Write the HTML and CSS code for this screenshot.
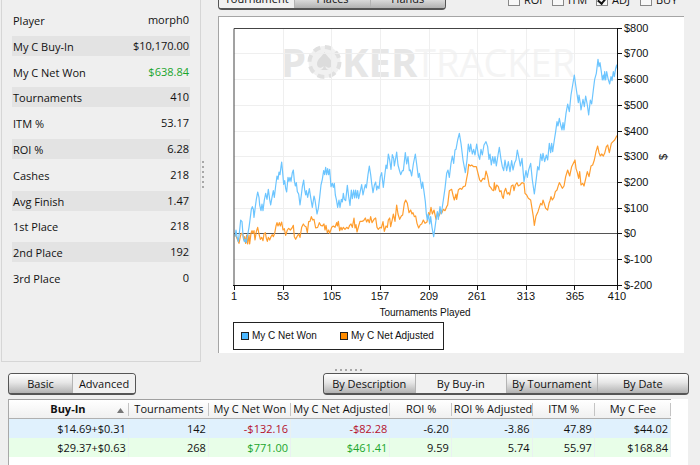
FILE: index.html
```
<!DOCTYPE html>
<html lang="en">
<head>
<meta charset="utf-8">
<title>Tournament results</title>
<link rel="stylesheet" href="styles.css">
</head>
<body>
<main class="app">
  <div class="upper">
    <aside class="summary">
      <dl class="stats">
        <div class="stat"><dt>Player</dt><dd>morph0</dd></div>
        <div class="stat"><dt>My C Buy-In</dt><dd>$10,170.00</dd></div>
        <div class="stat"><dt>My C Net Won</dt><dd class="gain">$638.84</dd></div>
        <div class="stat"><dt>Tournaments</dt><dd>410</dd></div>
        <div class="stat"><dt>ITM %</dt><dd>53.17</dd></div>
        <div class="stat"><dt>ROI %</dt><dd>6.28</dd></div>
        <div class="stat"><dt>Cashes</dt><dd>218</dd></div>
        <div class="stat"><dt>Avg Finish</dt><dd>1.47</dd></div>
        <div class="stat"><dt>1st Place</dt><dd>218</dd></div>
        <div class="stat"><dt>2nd Place</dt><dd>192</dd></div>
        <div class="stat"><dt>3rd Place</dt><dd>0</dd></div>
      </dl>
    </aside>
    <div class="splitter splitter-v"><i></i><i></i><i></i><i></i><i></i><i></i></div>
    <section class="graph">
      <div class="toolbar">
        <div class="segments views">
          <button type="button" class="active">Tournament</button>
          <button type="button">Places</button>
          <button type="button">Hands</button>
        </div>
        <div class="options">
          <label class="option"><input type="checkbox">ROI</label>
          <label class="option"><input type="checkbox">ITM</label>
          <label class="option"><input type="checkbox" checked>ADJ</label>
          <label class="option"><input type="checkbox">BUY</label>
        </div>
      </div>
      <div class="chart">
        <svg viewBox="219 17 465 336" role="img" aria-label="Tournaments Played">
          <g class="mark">
            <text class="mark-bold" x="281" y="77">P</text>
            <circle class="chip" cx="324.500" cy="62" r="16"/>
            <circle class="chip-edge" cx="324.500" cy="62" r="15"/>
            <path class="spade" d="M324.500 52C322 57 317 59 317 64C317 68 321 69 323.500 66C323.500 68 322.500 69.500 320 70H329C326.500 69.500 325.500 68 325.500 66C328 69 332 68 332 64C332 59 327 57 324.500 52Z"/>
            <text class="mark-bold" x="342" y="77">KER</text>
            <text class="mark-light" x="415" y="77">TRACKER</text>
          </g>
          <path class="grid" d="M283.500 28V285M331.500 28V285M380.500 28V285M429.500 28V285M477.500 28V285M526.500 28V285M574.500 28V285M234 53.500H617M234 79.500H617M234 105.500H617M234 131.500H617M234 156.500H617M234 182.500H617M234 208.500H617M234 259.500H617"/>
          <path class="zero" d="M234 233.500H617"/>
          <g transform="translate(225 140) scale(.333333)">
            <polyline class="adjusted" points="30,282 34,290 38,300 42,310 46,290 49,280 53,282 56,300 59,290 62,310 65,285 68,312 72,285 74,312 78,280 81,272 84,280 87,272 90,300 94,275 98,262 102,282 106,298 110,292 114,302 117,282 121,278 124,295 127,304 130,292 134,300 138,290 142,284 145,290 149,280 153,258 156,248 159,258 163,248 166,258 170,246 174,270 178,266 182,286 187,270 191,265 196,270 201,264 205,256 208,290 212,298 217,288 221,282 225,292 230,262 235,252 239,258 243,260 247,278 251,245 255,244 259,230 263,240 267,238 272,264 278,262 283,248 287,256 292,258 297,252 300,270 303,256 307,278 311,270 314,280 320,262 325,258 330,262 335,248 337,258 340,244 344,272 348,262 351,270 355,262 360,268 365,262 370,266 374,256 378,252 382,262 387,234 390,264 393,254 396,276 401,258 405,244 411,244 416,242 421,234 425,246 429,238 433,248 437,230 441,248 447,238 452,234 456,262 460,268 465,262 469,264 474,245 478,274 483,258 487,262 490,240 494,234 497,260 502,238 505,222 510,244 515,195 519,222 524,238 529,228 533,225 538,190 542,180 547,190 552,218 557,210 561,222 564,218 568,230 572,228 576,250 581,264 586,254 590,252 595,240 600,250 606,246 611,218 614,225 618,202 622,222 627,210 633,238 638,218 642,228 647,215 650,220 655,208 660,212 665,200 668,195 673,152 680,148 685,170 688,180 693,162 695,178 700,150 705,145 710,148 715,140 721,138 725,115 728,100 731,73 736,78 740,75 746,80 754,80 759,100 764,120 768,125 774,115 779,118 783,93 788,110 793,138 797,142 802,150 806,152 808,128 811,150 815,135 820,140 824,155 828,152 832,170 835,175 838,155 842,145 847,162 851,158 854,165 859,138 864,135 867,152 871,135 876,128 880,138 885,135 891,128 897,130 900,160 905,165 910,175 917,180 921,205 925,230 928,256 933,228 939,215 942,205 947,190 951,195 954,180 958,192 962,205 968,210 972,190 975,182 978,170 982,180 987,172 991,155 996,150 999,140 1003,128 1007,135 1012,145 1017,138 1022,110 1028,90 1034,108 1040,80 1044,72 1050,60 1053,85 1057,98 1061,115 1064,95 1068,135 1073,130 1077,138 1083,112 1087,95 1092,110 1098,78 1103,75 1108,60 1113,35 1118,18 1122,38 1126,48 1130,42 1135,48 1139,40 1144,20 1148,15 1153,38 1159,10 1164,5 1169,0 1174,-10 1178,-15"/>
            <polyline class="won" points="30,290 33,270 36,290 40,305 44,270 47,240 51,245 54,285 58,305 61,298 64,308 68,285 72,262 75,240 79,208 82,200 85,208 87,232 91,200 94,178 98,156 102,172 104,195 108,212 111,192 114,212 118,180 122,160 126,178 130,148 134,178 137,195 141,172 145,152 148,172 152,138 156,108 159,118 162,96 165,104 168,80 170,66 173,98 176,133 179,122 182,145 185,156 189,112 192,124 195,112 198,124 202,98 205,90 208,122 211,138 214,128 217,155 221,162 225,195 229,165 232,140 236,120 239,150 242,165 244,152 248,172 253,146 257,172 262,202 267,168 270,180 276,222 280,205 284,172 288,135 292,118 296,92 299,104 302,82 305,104 308,86 311,104 314,88 318,140 322,130 325,142 328,130 331,165 334,178 338,202 342,180 345,202 349,178 352,186 355,160 358,178 362,182 367,136 371,170 375,196 379,150 382,176 386,150 389,174 392,150 395,174 398,152 401,176 405,158 410,134 414,165 418,146 421,134 424,144 429,104 433,78 437,104 440,130 444,158 448,136 452,126 455,150 458,138 462,146 466,110 470,98 475,142 479,108 483,75 486,86 490,42 494,60 498,88 502,44 506,55 508,78 512,55 515,36 519,75 523,90 527,104 532,92 535,92 541,38 545,72 549,50 553,92 556,90 560,108 565,72 571,42 576,80 580,112 583,100 587,125 590,145 593,126 597,155 601,185 604,222 607,240 610,222 614,252 617,230 621,262 626,290 630,262 633,240 637,215 640,238 645,200 649,222 655,180 660,145 665,100 669,90 673,112 678,70 682,48 686,70 690,30 693,28 698,0 703,-20 708,10 714,60 721,98 726,60 730,12 734,35 737,12 742,42 746,28 750,45 755,12 760,45 764,58 768,28 772,45 777,15 783,5 788,20 792,58 795,42 799,75 803,50 807,70 810,50 814,78 819,45 823,22 828,58 832,80 836,92 840,60 845,92 850,65 855,95 860,62 864,90 869,68 873,60 877,30 882,55 886,78 891,55 897,125 903,92 907,112 911,90 917,70 922,120 928,162 934,115 938,80 942,90 947,42 951,62 954,40 959,65 964,45 968,60 973,10 977,38 980,10 983,35 988,0 992,-25 996,-55 999,-42 1003,-65 1007,-45 1011,-30 1014,-52 1017,-30 1023,-80 1028,-108 1033,-85 1038,-135 1043,-165 1048,-195 1052,-165 1056,-138 1060,-112 1062,-135 1066,-110 1068,-90 1074,-122 1078,-100 1082,-132 1087,-105 1091,-75 1096,-120 1100,-108 1105,-150 1109,-182 1114,-200 1119,-242 1122,-220 1125,-232 1129,-205 1132,-180 1135,-195 1137,-180 1139,-205 1142,-180 1145,-205 1149,-185 1154,-168 1158,-190 1161,-178 1165,-205 1168,-190 1172,-215 1175,-225 1178,-212"/>
          </g>
          <path class="frame" d="M234 285.500V28.500H617"/>
          <path class="axis" d="M233 285.500H622M617.500 28V290M234.500 285V290M283.500 285V290M331.500 285V290M380.500 285V290M429.500 285V290M477.500 285V290M526.500 285V290M574.500 285V290M617 28.500H622M617 53.500H622M617 79.500H622M617 105.500H622M617 131.500H622M617 156.500H622M617 182.500H622M617 208.500H622M617 233.500H622M617 259.500H622"/>
          <g class="ticks">
            <text x="624" y="32">$800</text><text x="624" y="57">$700</text><text x="624" y="83">$600</text><text x="624" y="109">$500</text><text x="624" y="135">$400</text><text x="624" y="160">$300</text><text x="624" y="186">$200</text><text x="624" y="212">$100</text><text x="624" y="237">$0</text><text x="624" y="263">$-100</text><text x="624" y="289">$-200</text>
          </g>
          <g class="ticks centred">
            <text x="234" y="300">1</text><text x="283" y="300">53</text><text x="332" y="300">105</text><text x="380" y="300">157</text><text x="429" y="300">209</text><text x="477" y="300">261</text><text x="526" y="300">313</text><text x="575" y="300">365</text><text x="617" y="300">410</text>
            <text class="axis-title" x="425" y="316">Tournaments Played</text>
            <text transform="translate(667 157) rotate(-90)">$</text>
          </g>
          <g class="ticks axis-title">
            <rect class="key-box" x="233.500" y="322.500" width="210" height="27"/>
            <rect class="key-won" x="241.500" y="332.500" width="7" height="7"/>
            <text x="252" y="339">My C Net Won</text>
            <rect class="key-adjusted" x="340.500" y="332.500" width="7" height="7"/>
            <text x="351" y="339">My C Net Adjusted</text>
          </g>
        </svg>
      </div>
    </section>
  </div>
  <div class="splitter splitter-h"><i></i><i></i><i></i><i></i><i></i><i></i></div>
  <section class="lower">
    <div class="groupings">
      <div class="segments detail">
        <button type="button">Basic</button>
        <button type="button" class="active">Advanced</button>
      </div>
      <div class="segments by">
        <button type="button">By Description</button>
        <button type="button" class="active">By Buy-in</button>
        <button type="button">By Tournament</button>
        <button type="button">By Date</button>
      </div>
    </div>
    <div class="report">
      <table>
        <colgroup><col class="c-buyin"><col class="c-count"><col class="c-won"><col class="c-adj"><col class="c-roi"><col class="c-roiadj"><col class="c-itm"><col class="c-fee"></colgroup>
        <thead>
          <tr><th class="sorted">Buy-In<svg class="arrow" viewBox="0 0 7 5" aria-hidden="true"><path d="M0 5L3.500 0L7 5Z"/></svg></th><th>Tournaments</th><th>My C Net Won</th><th>My C Net Adjusted</th><th>ROI %</th><th>ROI % Adjusted</th><th>ITM %</th><th>My C Fee</th></tr>
        </thead>
        <tbody>
          <tr><td>$14.69+$0.31</td><td>142</td><td class="loss">-$132.16</td><td class="loss">-$82.28</td><td>-6.20</td><td>-3.86</td><td>47.89</td><td>$44.02</td></tr>
          <tr><td>$29.37+$0.63</td><td>268</td><td class="gain">$771.00</td><td class="gain">$461.41</td><td>9.59</td><td>5.74</td><td>55.97</td><td>$168.84</td></tr>
        </tbody>
      </table>
    </div>
  </section>
</main>
</body>
</html>
```
FILE: styles.css
```
* { box-sizing: border-box; }

body {
  margin: 0;
  background: #efefef;
  color: #111;
  font: 11px/18px "Open Sans", "Noto Sans", sans-serif;
}

.app {
  display: flex;
  flex-direction: column;
  min-height: 100vh;
}

.upper { display: flex; }

/* Player summary */
.summary {
  flex: 0 0 200px;
  margin-left: 1px;
  padding: 10px 10px 73px;
  border: solid #d6d6d6;
  border-width: 0 1px 1px;
}

.stats {
  display: flex;
  flex-direction: column;
  justify-content: space-between;
  min-height: 278px;
  margin: 0;
}

.stat {
  display: flex;
  justify-content: space-between;
  height: 20px;
  padding: 0 1px;
  line-height: 20px;
}

.stat:nth-child(even) { background: #e3e3e3; }
.stat dt { padding-top: 1px; }
.stat dd { margin: 0; }
.gain { color: #1aa52c; }
.loss { color: #b5122c; }

/* Drag handles between panes */
.splitter { display: flex; gap: 3px; }
.splitter i { width: 2px; height: 2px; background: #a8a8a8; }

.splitter-v {
  flex: 0 0 17px;
  flex-direction: column;
  padding: 161px 0 0 1px;
}

.splitter-h {
  justify-content: center;
  padding: 7px 4px 2px 0;
}

/* Graph pane */
.graph { flex: 1; min-width: 0; padding-right: 16px; }

.toolbar {
  display: flex;
  justify-content: space-between;
  align-items: flex-end;
  height: 10px;
  margin-bottom: 6px;
  overflow: hidden;
}

.options {
  display: flex;
}

.option {
  display: flex;
  align-items: flex-end;
  gap: 4px;
  width: 44px;
  height: 18px;
  padding-bottom: 4px;
  line-height: 13px;
  white-space: nowrap;
}

.option input {
  appearance: none;
  display: grid;
  place-items: center;
  width: 12px;
  height: 12px;
  margin: 0;
  border: 1px solid #888;
  background: #f8f8f8;
}

.option input:checked::after {
  content: "";
  width: 4px;
  height: 6px;
  border: solid #111;
  border-width: 0 2px 2px 0;
  transform: rotate(40deg);
}

.chart {
  border: solid #a5a5a5;
  border-width: 1px 0 0 1px;
  background: #fff;
}

.chart svg { display: block; width: 100%; }
.chart polyline { fill: none; vector-effect: non-scaling-stroke; stroke-linejoin: round; }
.won { stroke: #6cc5ff; stroke-width: 1.2px; }
.adjusted { stroke: #ff9d2e; stroke-width: 1.2px; }
.grid { stroke: #efefef; }
.zero { stroke: #555; }
.frame { fill: none; stroke: #444; }
.axis { stroke: #111; }

.ticks { font: 11px "Liberation Sans", Arial, sans-serif; fill: #111; }
.axis-title { font-size: 10px; }
.centred { text-anchor: middle; }
.key-box { fill: #fff; stroke: #222; }
.key-won { fill: #4db8ff; stroke: #222; }
.key-adjusted { fill: #ff8c00; stroke: #222; }

.mark-bold { font: bold 40px "Open Sans", sans-serif; fill: #e6e6e6; }
.mark-light { font: 38px "Open Sans", sans-serif; fill: #f4f4f4; }
.chip { fill: #f1f1f1; }
.chip-edge { fill: none; stroke: #e0e0e0; stroke-width: 4px; stroke-dasharray: 7 4.780; }
.spade { fill: #dcdcdc; }

/* Segmented buttons */
.segments {
  display: grid;
  height: 22px;
  border: 1px solid #555;
  border-bottom-width: 2px;
  border-radius: 4px;
  overflow: hidden;
}

.segments button {
  min-width: 0;
  padding: 0;
  border: 0;
  border-left: 1px solid #b4b4b4;
  background: linear-gradient(#fff, #e6e6e6 45%, #b2b2b2);
  color: #111;
  font: inherit;
  white-space: nowrap;
}

.segments button:first-child { border-left: 0; }
.segments .active { background: #f1f1f1; }
.views { flex: 0 0 228px; grid-template-columns: repeat(3, 1fr); }
.detail { flex: 0 0 128px; grid-template-columns: 1fr 1fr; }
.by { flex: 0 0 366px; grid-template-columns: 91fr 92fr 91fr 92fr; }

/* Results table */
.lower {
  display: flex;
  flex: 1;
  flex-direction: column;
  padding: 0 11px 0 8px;
}

.groupings {
  display: flex;
  justify-content: space-between;
  margin-bottom: 4px;
}

.report {
  flex: 1;
  margin-right: 1px;
  padding-right: 17px;
  border-left: 1px solid #a8a8a8;
  background: #fff;
}

table {
  width: 100%;
  border-collapse: separate;
  border-spacing: 0;
  table-layout: fixed;
}

th, td { height: 19px; padding: 0 2px; white-space: nowrap; }

th {
  border-top: 1px solid #a0a0a0;
  border-bottom: 1px solid #b0b0b0;
  background: linear-gradient(90deg, #c4c4c4, #c4c4c4) right center / 1px 13px no-repeat, linear-gradient(#fff, #f0f0f0);
  font-weight: normal;
}

.sorted { position: relative; padding-right: 4px; font-weight: bold; }
.arrow { position: absolute; right: 5px; bottom: 5px; width: 7px; height: 5px; fill: #777; }
td { text-align: right; border-right: 1px solid #e9f1f1; }
tbody tr:nth-child(odd) { background: #e0f1fd; }
tbody tr:nth-child(even) { background: #e8fee8; }

.c-buyin { width: 18.1%; }
.c-count { width: 12.1%; }
.c-won { width: 12.4%; }
.c-adj { width: 15%; }
.c-roi { width: 9.3%; }
.c-roiadj { width: 12.2%; }
.c-itm { width: 9.4%; }
.c-fee { width: 11.5%; }
```
